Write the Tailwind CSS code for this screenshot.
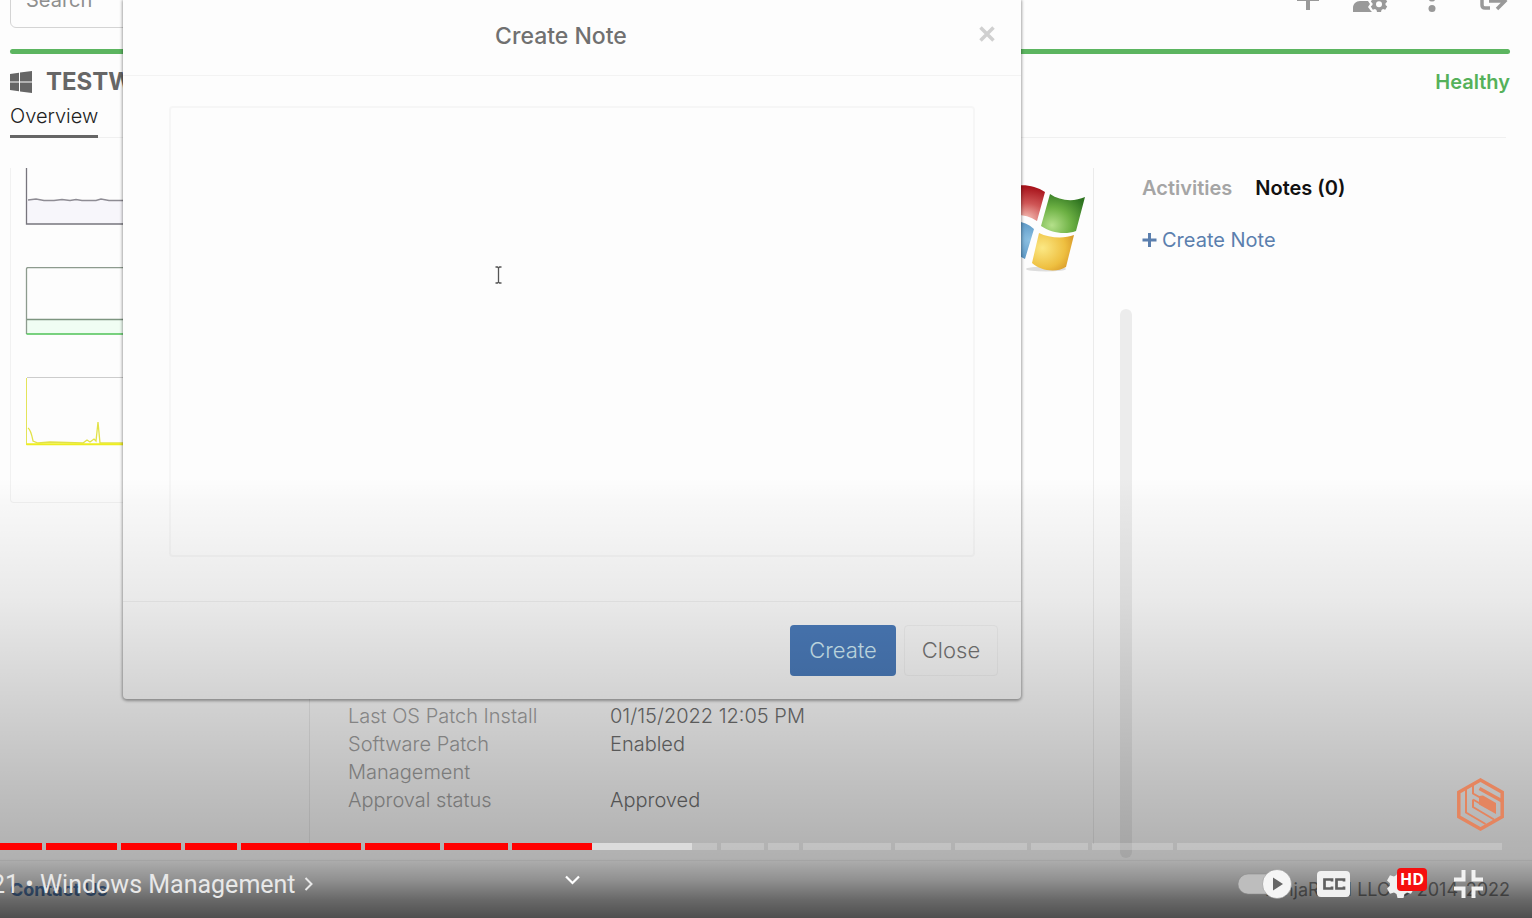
<!DOCTYPE html>
<html lang="en">
<head>
<meta charset="utf-8">
<meta name="viewport" content="width=device-width, initial-scale=1">
<title>Create Note</title>
<script src="https://cdn.jsdelivr.net/npm/@tailwindcss/browser@4"></script>
</head>
<body class="bg-[#fdfdfd] font-['Inter',sans-serif] text-xl text-[#505050]">
<div class="relative flex h-screen flex-col overflow-hidden">

  <!-- Device page -->
  <header class="-mt-7 flex h-14 shrink-0 items-stretch justify-between pl-[10px] pr-[7px]">
    <input type="search" aria-label="Search" placeholder="Search" class="w-[300px] rounded-md border border-[#d4d4d4] bg-transparent px-[15px] placeholder:text-[#8f8f8f]">
    <div class="grid grid-cols-[62px_62px_62px_62px] items-center justify-items-center text-[#999]">
      <button aria-label="Add"><svg class="h-8 w-8" viewBox="0 0 32 32" fill="none" stroke="currentColor" stroke-width="4"><path d="M16 4v22M5 15h22"/></svg></button>
      <button aria-label="User settings"><svg class="h-8 w-9" viewBox="0 0 36 32" fill="currentColor"><circle cx="12" cy="8" r="7"/><path d="M1 28v-4c0-4 3-7 7-7h8l2 3-2 3 3 4 1 1z"/><path fill-rule="evenodd" d="M25 12h4l.5 2.300 1.500.9 2.200-.8 2 3.300-1.700 1.600v1.600l1.700 1.600-2 3.300-2.200-.8-1.500.9L29 28h-4l-.5-2.100-1.500-.9-2.200.8-2-3.300 1.700-1.600v-1.600l-1.700-1.600 2-3.300 2.200.8 1.500-.9zM27 17.200a3 3 0 100 6 3 3 0 000-6z"/></svg></button>
      <button aria-label="More"><svg class="h-8 w-4" viewBox="0 0 16 32" fill="currentColor"><circle cx="8" cy="4" r="3.500"/><circle cx="8" cy="14" r="3.500"/><circle cx="8" cy="24.500" r="3.500"/></svg></button>
      <button aria-label="Log out"><svg class="h-8 w-8" viewBox="0 0 32 32" fill="none" stroke="currentColor" stroke-width="3.500"><path d="M12 24H7q-3 0-3-3V10q0-3 3-3h5M11 17h16M19 9l8 8-8 8"/></svg></button>
    </div>
  </header>
  <div class="mt-[21px] ml-[10px] mr-[22px] h-[5px] shrink-0 rounded-full bg-[#5cb560]"></div>
  <div class="flex h-[55px] shrink-0 items-center justify-between pl-[10px] pr-[22px]">
    <h1 class="flex items-center gap-[14px] text-2xl font-bold text-[#666]">
      <svg class="size-[22px]" viewBox="0 0 22 22" fill="currentColor"><path d="M0 3l9-1.300v8.800H0zM10 1.500L22 0v10.500H10zM0 11.500h9v8.800L0 19zM10 11.500h12V22l-12-1.600z"/></svg>
      TESTWIN
    </h1>
    <span class="font-semibold text-[#55b15a]">Healthy</span>
  </div>
  <nav class="ml-[10px] mr-[26px] -mt-[5px] flex h-[34px] shrink-0 gap-6 border-b border-[#f0f0f0]">
    <a href="#" class="-mb-px h-[34px] border-b-3 border-[#666] font-[350] leading-[24px] text-[#222]">Overview</a>
    <a href="#" class="leading-[24px] text-[#888]">Details</a>
  </nav>

  <main class="mt-[30px] flex min-h-0 flex-1 pl-[10px]">
    <section class="flex h-[335px] w-[270px] shrink-0 flex-col gap-[42px] rounded-b border border-t-0 border-[#f1f1f1] pl-[14px]">
      <svg class="h-[57px] w-[200px]" viewBox="0 0 200 57" fill="none"><path d="M2 32h198v24H2z" fill="#f7f6fb"/><path d="M1.500 0v56h199" stroke="#77757d" stroke-width="1.300"/><path d="M3 32l8-1 8 1.500h10l8-1 8 1 6-1 6 1h14l5-1.500 8 1.500h117" stroke="#8e8c94" stroke-width="1.500"/></svg>
      <svg class="h-[68px] w-[200px]" viewBox="0 0 200 68" fill="none"><path d="M2 53h198v14H2z" fill="#f0fdf3"/><path d="M200 .5H3q-1.500 0-1.500 1.500v65" stroke="#8d9b8e" stroke-width="1.300"/><path d="M2 52.500h198" stroke="#7d9580" stroke-width="1.500"/><path d="M1.500 67h199" stroke="#4ec256" stroke-width="1.500"/></svg>
      <svg class="h-[69px] w-[200px]" viewBox="0 0 200 69" fill="none"><path d="M200 .5H2" stroke="#ccc"/><path d="M1.500 1v67" stroke="#e4e45a"/><path d="M3 51c3 2 4 8 5 13l5 2 12-1 33 1 4-3 3 2 4-3 2 2 2-19 2 21h35" stroke="#e2e247" stroke-width="1.300"/><path d="M1.500 67.200h199" stroke="#eeee20" stroke-width="2"/></svg>
    </section>
    <section class="mb-[16px] ml-[29px] flex w-[785px] shrink-0 flex-col justify-end border-x border-[#ebebeb] pb-[30px] pl-[38px]">
      <dl class="grid grid-cols-[230px_1fr] gap-x-8 font-[350] leading-7">
        <dt class="text-[#a2a2a2]">Last OS Patch Install</dt><dd class="text-[#707070]">01/15/2022 12:05 PM</dd>
        <dt class="text-[#a2a2a2]">Software Patch<br>Management</dt><dd class="text-[#707070]">Enabled</dd>
        <dt class="text-[#a2a2a2]">Approval status</dt><dd class="text-[#707070]">Approved</dd>
      </dl>
    </section>
    <div class="mt-[141px] mb-[2px] ml-[26px] w-3 shrink-0 rounded-full bg-[#ececec]"></div>
    <aside class="ml-[10px] flex flex-col items-start gap-6 pt-[6px]">
      <div class="flex gap-[23px] font-semibold leading-7">
        <button class="text-[#a5a5a5]">Activities</button>
        <button class="text-[#111]">Notes (0)</button>
      </div>
      <button class="flex items-center gap-1 leading-7 text-[#5b7fae]">
        <svg class="size-4" viewBox="0 0 16 16" stroke="currentColor" stroke-width="3"><path d="M7.500 1v14M.5 8h14"/></svg>Create Note
      </button>
    </aside>
  </main>
  <footer class="flex h-[58px] shrink-0 items-center justify-between border-t border-[#f0f0f0] pl-[10px] pr-[22px] text-lg">
    <a href="#" class="font-bold text-[#5b87c0]">Contact Us</a>
    <span class="text-[#8a8a8a]">NinjaRMM LLC © 2014-2022</span>
  </footer>

  <!-- Operating system logo of the device -->
  <svg class="absolute left-[990px] top-[180px] h-24 w-24" viewBox="0 0 96 96">
    <defs>
      <radialGradient id="r" cx=".6" cy=".95" r=".9"><stop offset="0" stop-color="#f6c4ba"/><stop offset=".5" stop-color="#cf5656"/><stop offset="1" stop-color="#a8141c"/></radialGradient>
      <radialGradient id="g" cx=".25" cy=".8" r=".9"><stop offset="0" stop-color="#b4e08a"/><stop offset=".5" stop-color="#6cb043"/><stop offset="1" stop-color="#2e7320"/></radialGradient>
      <radialGradient id="b" cx=".9" cy=".5" r=".8"><stop offset="0" stop-color="#8cc0e2"/><stop offset="1" stop-color="#3f80b5"/></radialGradient>
      <radialGradient id="y" cx=".25" cy=".4" r=".9"><stop offset="0" stop-color="#fbe884"/><stop offset=".6" stop-color="#eebf40"/><stop offset="1" stop-color="#cf8a20"/></radialGradient>
    </defs>
    <ellipse cx="56" cy="89" rx="20" ry="2.500" fill="#ddd"/>
    <path d="M14 10c12-7 29-6 41 2l-8 29c-12-8-28-8-40-2z" fill="url(#r)"/>
    <path d="M60 14c10 7 24 8 35 3l-9 34c-11 4-25 2-35-5z" fill="url(#g)"/>
    <path d="M6 45c14-6 28-5 38 4l-9 30c-11-7-24-7-36-2z" fill="url(#b)"/>
    <path d="M49 53c10 5 25 6 35 2l-8 32c-10 6-25 4-34-4z" fill="url(#y)"/>
  </svg>

  <!-- Create Note dialog -->
  <div role="dialog" aria-labelledby="dlg" class="absolute left-[123px] top-0 flex h-[699px] w-[898px] flex-col rounded-b bg-[#fdfdfd] shadow-[0_1px_3px_1px_rgba(0,0,0,0.35)]">
    <div class="flex h-[76px] items-center justify-center border-b border-[#f3f3f3] pb-[3px]">
      <h2 id="dlg" class="ml-[2px] flex-1 pl-[18px] text-center text-[23px] font-medium text-[#707070]">Create Note</h2>
      <button aria-label="Close dialog" class="mr-[26px] mb-1 text-[#d0d0d0]"><svg class="size-4" viewBox="0 0 16 16" stroke="currentColor" stroke-width="3.500"><path d="M1.500 1.500l13 13M14.500 1.500l-13 13"/></svg></button>
    </div>
    <div class="flex-1 px-[46px] pt-[30px] pb-[44px]">
      <textarea aria-label="Note" class="block h-full w-full resize-none rounded-sm border-2 border-[#f6f6f6]"></textarea>
    </div>
    <div class="flex h-[98px] items-center justify-end gap-2 border-t border-[#f0f0f0] pr-[23px] text-[22px] font-[350]">
      <button class="h-[51px] w-[106px] rounded bg-[#4c7dbd] text-[#d4f0fa]">Create</button>
      <button class="h-[51px] w-[94px] rounded border border-[#f3f3f3] text-[#777]">Close</button>
    </div>
  </div>
  <svg class="absolute left-[493px] top-[266px] h-[18px] w-[11px]" viewBox="0 0 11 18" fill="none" stroke="#555" stroke-width="1.300"><path d="M2.500 1h2l1 1 1-1h2M2.500 17h2l1-1 1 1h2M5.500 2v14"/></svg>

  <!-- Player shade -->
  <div class="pointer-events-none absolute inset-x-0 bottom-0 h-[440px] bg-[linear-gradient(to_bottom,transparent_0,rgba(0,0,0,0.02)_22px,rgba(0,0,0,0.08)_122px,rgba(0,0,0,0.17)_222px,rgba(0,0,0,0.24)_302px,rgba(0,0,0,0.29)_362px,rgba(0,0,0,0.30)_380px,rgba(0,0,0,0.43)_402px,rgba(0,0,0,0.59)_422px,rgba(0,0,0,0.69)_440px)]"></div>

  <!-- Player controls -->
  <div class="absolute inset-x-0 bottom-0 flex flex-col">
    <a href="#" aria-label="Channel" class="mb-[12px] mr-[28px] self-end text-[#e5855f]">
      <svg class="h-[53px] w-[47px]" viewBox="0 0 47 53" fill="none" stroke="currentColor" stroke-width="3.500"><path d="M23.500 2L45.200 14.200v24.600L23.500 51 1.800 38.800V14.200z"/><path stroke-width="2" d="M9 10v24.500l19.500 11.500M16 6v9.500l7 4v6M16 21.500v7.500l21 12.500M16 21.500l7 4"/><path stroke-width="3.500" d="M22.500 10.500L46 23.500"/><path fill="currentColor" stroke="none" d="M22 18l4-.5L39 25v11L22 26.500z"/></svg>
    </a>
    <div role="progressbar" aria-label="Playback" class="mr-[30px] flex h-[7px] gap-1">
      <div class="bg-[#f00]" style="flex:42 0 0"></div><div class="bg-[#f00]" style="flex:71 0 0"></div><div class="bg-[#f00]" style="flex:60 0 0"></div><div class="bg-[#f00]" style="flex:52 0 0"></div><div class="bg-[#f00]" style="flex:120 0 0"></div><div class="bg-[#f00]" style="flex:75 0 0"></div><div class="bg-[#f00]" style="flex:64 0 0"></div>
      <div class="flex bg-white/20" style="flex:205 0 0"><div class="bg-[#f00]" style="width:39%"></div><div class="bg-[#dcdcdc]" style="width:49%"></div></div>
      <div class="bg-white/20" style="flex:43 0 0"></div><div class="bg-white/20" style="flex:31 0 0"></div><div class="bg-white/20" style="flex:88 0 0"></div><div class="bg-white/20" style="flex:56 0 0"></div><div class="bg-white/20" style="flex:72 0 0"></div><div class="bg-white/20" style="flex:57 0 0"></div><div class="bg-white/20" style="flex:81 0 0"></div><div class="bg-white/20" style="flex:325 0 0"></div>
    </div>
    <div class="flex h-[68px] items-center pr-[49px] text-white">
      <div class="-ml-[9px] w-[574px] shrink-0">
        <button class="flex items-center gap-2 whitespace-nowrap font-['Roboto',sans-serif] text-[25px] text-[#e8e8e8]">21 • Windows Management <svg class="h-[14px] w-[9px]" viewBox="0 0 9 14" fill="none" stroke="currentColor" stroke-width="2"><path d="M1.500 1l6 6-6 6"/></svg></button>
      </div>
      <button aria-label="Expand" class="mb-2"><svg class="h-[10px] w-[15px]" viewBox="0 0 15 10" fill="none" stroke="currentColor" stroke-width="2.200"><path d="M1 1.500l6.500 6.500L14 1.500"/></svg></button>
      <div class="ml-auto flex items-center">
        <button role="switch" aria-checked="true" aria-label="Autoplay"><svg class="h-[30px] w-[54px]" viewBox="0 0 54 30"><rect y="5" width="46" height="20" rx="10" fill="#bdbdbd" stroke="#888" stroke-opacity=".5"/><circle cx="39" cy="15" r="14.500" fill="#f5f5f5" stroke="#888" stroke-opacity=".5"/><path d="M35 8.500v13l10-6.500z" fill="#666"/></svg></button>
        <button aria-label="Captions" class="ml-[25px]"><svg class="h-[26px] w-[33px]" viewBox="0 0 33 26" fill="none"><rect width="33" height="26" rx="4" fill="#f1f1f1"/><path d="M15 10.500V8.500H7.500v9H15v-2M27 10.500V8.500h-7.500v9H27v-2" stroke="#606060" stroke-width="2.700"/></svg></button>
        <button aria-label="Settings" class="relative ml-[37px] h-[30px] w-10">
          <svg class="h-[30px] w-7" viewBox="0 0 28 30" fill="#f0f0f0"><path d="M10.500 2h6l1 4 2.500 1.500 4-1.300 3 5.200-3 2.800v2.600l3 2.800-3 5.200-4-1.300-2.500 1.500-1 4h-6l-1-4L7 23.500l-4 1.300-3-5.200 3-2.800v-2.600l-3-2.800 3-5.200 4 1.300L9.500 6z"/></svg>
          <span class="absolute right-0 -top-px rounded-sm bg-[#f50f0f] px-[3px] font-['Open_Sans',sans-serif] text-base font-bold leading-[23px]">HD</span>
        </button>
        <button aria-label="Exit full screen" class="ml-[27px]"><svg class="h-[28px] w-[29px]" viewBox="0 0 29 28" fill="none" stroke="#f2f2f2" stroke-width="4"><path d="M9.500 0v9.500H0M19.500 0v9.500H29M9.500 28v-9.500H0M19.500 28v-9.500H29"/></svg></button>
      </div>
    </div>
  </div>
</div>
</body>
</html>
